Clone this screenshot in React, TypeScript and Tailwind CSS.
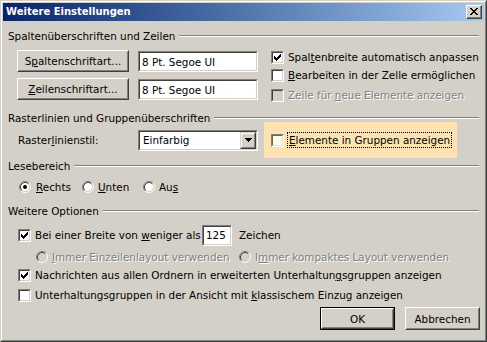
import React from "react";

const CHECK_ROWS: [number, number][][] = [
  [[6, 1]],
  [[5, 2]],
  [[0, 1], [4, 3]],
  [[0, 2], [3, 3]],
  [[0, 5]],
  [[1, 3]],
  [[2, 1]],
];

function CheckMark() {
  return (
    <svg width="7" height="7" viewBox="0 0 7 7" shapeRendering="crispEdges">
      {CHECK_ROWS.map((row, y) =>
        row.map(([x, w], i) => <rect key={`${y}-${i}`} x={x} y={y} width={w} height={1} fill="#000" />)
      )}
    </svg>
  );
}

function Check({ checked = false, disabled = false, hot = false }: { checked?: boolean; disabled?: boolean; hot?: boolean }) {
  return (
    <span className="flex w-[13px] h-[13px] shrink-0 border border-t-[#808080] border-l-[#808080] border-b-white border-r-white">
      <span
        className={
          hot
            ? "flex flex-1 items-center justify-center border border-t-[#7a6640] border-l-[#7a6640] border-b-[#f0e2c0] border-r-[#f0e2c0] bg-[#fffbe4]"
            : disabled
            ? "flex flex-1 items-center justify-center border border-t-[#404040] border-l-[#404040] border-b-[#d4d0c8] border-r-[#d4d0c8] bg-[#d4d0c8]"
            : "flex flex-1 items-center justify-center border border-t-[#404040] border-l-[#404040] border-b-[#d4d0c8] border-r-[#d4d0c8] bg-white"
        }
      >
        {checked && <CheckMark />}
      </span>
    </span>
  );
}

function Radio({ checked = false, disabled = false }: { checked?: boolean; disabled?: boolean }) {
  return (
    <svg width="12" height="12" viewBox="0 0 12 12" className="shrink-0">
      <circle cx="6" cy="6" r="4.5" fill={disabled ? "#d4d0c8" : "#fff"} />
      <path d="M2.11 9.89 A5.5 5.5 0 0 1 9.89 2.11" stroke="#808080" fill="none" />
      <path d="M9.89 2.11 A5.5 5.5 0 0 1 2.11 9.89" stroke="#fff" fill="none" />
      <path d="M2.82 9.18 A4.5 4.5 0 0 1 9.18 2.82" stroke="#404040" fill="none" />
      <path d="M9.18 2.82 A4.5 4.5 0 0 1 2.82 9.18" stroke="#d4d0c8" fill="none" />
      {checked && <circle cx="6" cy="6" r="2" fill="#000" />}
    </svg>
  );
}

function Header({ label }: { label: string }) {
  return (
    <div className="flex items-center pl-[5px] pr-[5px] h-[14px]">
      <span className="whitespace-nowrap">{label}</span>
      <div className="flex-1 ml-[4px] h-[2px] border-t border-t-[#808080] border-b border-b-white" />
    </div>
  );
}

function Button({ children, w, h, isDefault = false }: { children: React.ReactNode; w: string; h: string; isDefault?: boolean }) {
  const inner = (
    <div className="flex flex-1 self-stretch border border-t-white border-l-white border-r-[#404040] border-b-[#404040]">
      <div className="flex flex-1 items-center justify-center border border-t-[#d4d0c8] border-l-[#d4d0c8] border-r-[#808080] border-b-[#808080]">
        {children}
      </div>
    </div>
  );
  return (
    <div className={`flex shrink-0 ${w} ${h} ${isDefault ? "border border-black" : ""}`}>{inner}</div>
  );
}

function Sunken({ children, className }: { children: React.ReactNode; className: string }) {
  return (
    <div className={`flex shrink-0 border border-t-[#808080] border-l-[#808080] border-b-white border-r-white ${className}`}>
      <div className="flex flex-1 items-center border border-t-[#404040] border-l-[#404040] border-b-[#d4d0c8] border-r-[#d4d0c8] bg-white">
        {children}
      </div>
    </div>
  );
}

const dis = "text-[#808080] [text-shadow:1px_1px_0_#fff]";

export default function App() {
  return (
    <div className="w-[487px] h-[342px] font-['DejaVu_Sans',sans-serif] text-[10.4px] leading-[12px] text-black">
      <div className="flex flex-col w-full h-full border border-t-[#d4d0c8] border-l-[#d4d0c8] border-b-[#404040] border-r-[#404040]">
        <div className="flex flex-col flex-1 border border-t-white border-l-white border-b-[#808080] border-r-[#808080] bg-[#d4d0c8] p-[1px]">
          {/* Title bar */}
          <div className="flex items-center h-[18px] pl-[3px] pr-[2px] bg-gradient-to-r from-[#0a246a] to-[#a6caf0]">
            <span className="flex-1 font-bold text-white text-[10px]">Weitere Einstellungen</span>
            <div className="flex w-[16px] h-[14px] border border-t-white border-l-white border-r-[#404040] border-b-[#404040] bg-[#d4d0c8]">
              <div className="flex flex-1 items-center justify-center border-r border-b border-r-[#808080] border-b-[#808080]">
                <svg width="8" height="7" viewBox="0 0 8 7" shapeRendering="crispEdges">
                  <path d="M0 0h2v1h-2z M6 0h2v1h-2z M1 1h2v1h-2z M5 1h2v1h-2z M2 2h4v1h-4z M3 3h2v1h-2z M2 4h4v1h-4z M1 5h2v1h-2z M5 5h2v1h-2z M0 6h2v1h-2z M6 6h2v1h-2z" fill="#000" />
                </svg>
              </div>
            </div>
          </div>

          {/* Content */}
          <div className="flex flex-col">
            <div className="flex flex-col justify-end h-[22px]">
              <Header label="Spaltenüberschriften und Zeilen" />
            </div>

            {/* Row B */}
            <div className="flex h-[61px] pl-[14px] mt-[7px]">
              <div className="flex flex-col gap-[6px]">
                <Button w="w-[112px]" h="h-[22px]">
                  <span>S<u>p</u>altenschriftart...</span>
                </Button>
                <Button w="w-[112px]" h="h-[22px]">
                  <span><u>Z</u>eilenschriftart...</span>
                </Button>
              </div>
              <div className="flex flex-col gap-[7px] ml-[9px] mt-[1px]">
                <Sunken className="w-[120px] h-[21px]">
                  <span className="pl-[2px]">8 Pt. Segoe UI</span>
                </Sunken>
                <Sunken className="w-[120px] h-[21px]">
                  <span className="pl-[2px]">8 Pt. Segoe UI</span>
                </Sunken>
              </div>
              <div className="flex flex-col ml-[13px] -mt-[2px]">
                <div className="flex items-center h-[18px] gap-[4px]">
                  <Check checked />
                  <span>Spal<u>t</u>enbreite automatisch anpassen</span>
                </div>
                <div className="flex items-center h-[18px] gap-[4px]">
                  <Check />
                  <span><u>B</u>earbeiten in der Zelle ermöglichen</span>
                </div>
                <div className="flex items-center h-[18px] gap-[4px] mt-[2px]">
                  <Check disabled />
                  <span className={dis}>Zeile für <u>n</u>eue Elemente anzeigen</span>
                </div>
              </div>
            </div>

            <Header label="Rasterlinien und Gruppenüberschriften" />

            {/* Row C */}
            <div className="flex items-center h-[36px] -mt-[3px] pl-[15px]">
              <span className="w-[120px] shrink-0">Raster<u>l</u>inienstil:</span>
              <Sunken className="w-[120px] h-[21px]">
                <span className="flex-1 pl-[3px]">Einfarbig</span>
                <div className="flex self-stretch w-[16px] border border-t-[#d4d0c8] border-l-[#d4d0c8] border-r-[#404040] border-b-[#404040] bg-[#d4d0c8]">
                  <div className="flex flex-1 items-center justify-center border border-t-white border-l-white border-r-[#808080] border-b-[#808080]">
                    <svg width="7" height="4" viewBox="0 0 7 4" shapeRendering="crispEdges">
                      <path d="M0 0h7v1h-7z M1 1h5v1h-5z M2 2h3v1h-3z M3 3h1v1h-1z" fill="#000" />
                    </svg>
                  </div>
                </div>
              </Sunken>
              <div className="flex items-center self-stretch w-[193px] ml-[6px] pl-[7px] bg-[#fde3b1] gap-[3px]">
                <Check hot />
                <span className="border border-dotted border-black px-[1px] leading-[14px]">
                  <u>E</u>lemente in Gruppen anzeigen
                </span>
              </div>
            </div>

            <div className="mt-[1px]">
              <Header label="Lesebereich" />
            </div>

            <div className="flex items-center h-[18px] mt-[5px] pl-[16px]">
              <div className="flex items-center gap-[5px] w-[63px]">
                <Radio checked />
                <span><u>R</u>echts</span>
              </div>
              <div className="flex items-center gap-[4px] w-[61px]">
                <Radio />
                <span><u>U</u>nten</span>
              </div>
              <div className="flex items-center gap-[4px]">
                <Radio />
                <span>Au<u>s</u></span>
              </div>
            </div>

            <div className="mt-[8px]">
              <Header label="Weitere Optionen" />
            </div>

            <div className="flex items-center h-[22px] mt-[6px] pl-[15px]">
              <Check checked />
              <span className="w-[171px] pl-[4px] shrink-0">Bei einer Breite von <u>w</u>eniger als</span>
              <Sunken className="w-[30px] h-[21px]">
                <span className="pl-[2px]">125</span>
              </Sunken>
              <span className="ml-[7px]">Zeichen</span>
            </div>

            <div className="flex items-center h-[18px] mt-[2px] pl-[33px]">
              <div className="flex items-center gap-[4px] w-[203px]">
                <Radio disabled />
                <span className={dis}><u>I</u>mmer Einzeilenlayout verwenden</span>
              </div>
              <div className="flex items-center gap-[4px]">
                <Radio disabled />
                <span className={dis}>I<u>m</u>mer kompaktes Layout verwenden</span>
              </div>
            </div>

            <div className="flex items-center h-[18px] pl-[15px] gap-[4px]">
              <Check checked />
              <span>Nachrichten aus allen Ordnern in erweiterten Unterhaltun<u>g</u>sgruppen anzeigen</span>
            </div>

            <div className="flex items-center h-[18px] mt-[2px] pl-[15px] gap-[4px]">
              <Check />
              <span>Unterhaltungsgruppen in der Ansicht mit <u>k</u>lassischem Einzug anzeigen</span>
            </div>

            <div className="flex justify-end gap-[10px] pr-[4px] mt-[3px]">
              <Button w="w-[75px]" h="h-[23px]" isDefault>
                <span>OK</span>
              </Button>
              <Button w="w-[75px]" h="h-[23px]">
                <span>Abbrechen</span>
              </Button>
            </div>
          </div>
        </div>
      </div>
    </div>
  );
}
